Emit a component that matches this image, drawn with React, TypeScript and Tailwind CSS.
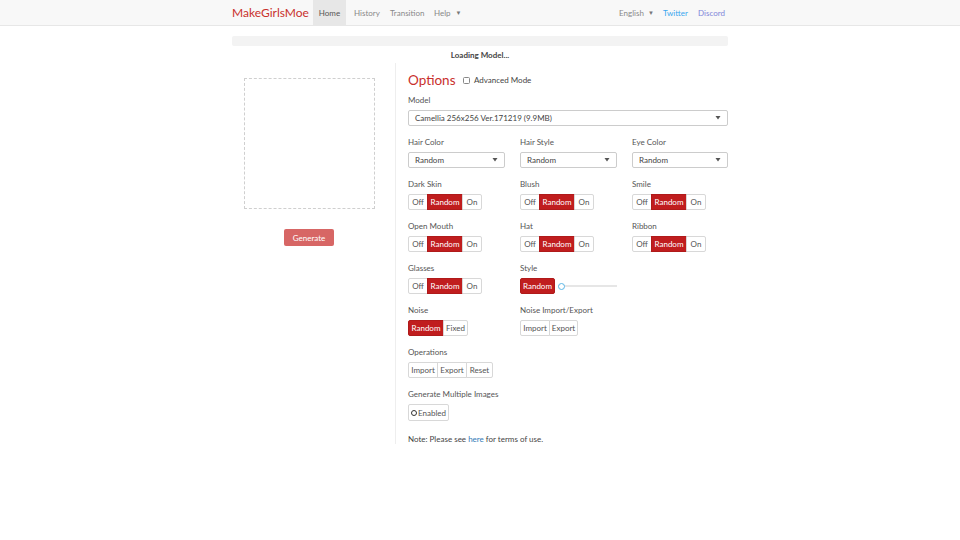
import * as React from "react";

const font = { fontFamily: "Lato, 'Noto Sans', sans-serif" };

function Caret() {
  return (
    <svg width="6" height="4" viewBox="0 0 6 4" className="shrink-0">
      <path d="M0.5 0 L5.5 0 L3 3.5 Z" fill="#555" />
    </svg>
  );
}

function Select({ value, width }: { value: string; width: string }) {
  return (
    <div
      className={`${width} h-[16px] border border-[#cccccc] rounded-[2px] bg-white flex items-center justify-between pl-[6px] pr-[6px] text-[8px] text-[#444]`}
    >
      <span>{value}</span>
      <Caret />
    </div>
  );
}

type Btn = { label: string; w: string; active?: boolean };

function Group({ items }: { items: Btn[] }) {
  return (
    <div className="flex h-[16px]">
      {items.map((b, i) => (
        <div
          key={i}
          className={`${b.w} flex items-center justify-center text-[8px] border ${
            b.active
              ? "bg-[#c01d1e] border-[#b01a1a] text-white"
              : "bg-white border-[#d8d8d8] text-[#555]"
          } ${i > 0 ? "-ml-px" : ""} ${i === 0 ? "rounded-l-[2px]" : ""} ${
            i === items.length - 1 ? "rounded-r-[2px]" : ""
          }`}
        >
          {b.label}
        </div>
      ))}
    </div>
  );
}

const tri: Btn[] = [
  { label: "Off", w: "w-[20px]" },
  { label: "Random", w: "w-[36px]", active: true },
  { label: "On", w: "w-[20px]" },
];

function Field({ label, children }: { label: string; children: React.ReactNode }) {
  return (
    <div className="flex flex-col h-[42px]">
      <div className="h-[10px] leading-[10px] text-[8px] text-[#555] mb-[5px] whitespace-nowrap">{label}</div>
      {children}
    </div>
  );
}

export default function App() {
  return (
    <div className="w-[960px] h-[540px] bg-white overflow-hidden" style={font}>
      {/* navbar */}
      <nav className="h-[26px] bg-[#f8f8f8] border-b border-[#e7e7e7]">
        <div className="w-[496px] mx-auto flex h-full items-stretch">
          <div className="w-[81px] flex items-center text-[12px] text-[#c9302c] whitespace-nowrap">
            MakeGirlsMoe
          </div>
          <div className="flex text-[8px] text-[#888]">
            <div className="w-[33px] bg-[#e7e7e7] text-[#555] flex items-center justify-center">Home</div>
            <div className="w-[36px] pl-[8px] flex items-center">History</div>
            <div className="w-[44px] pl-[8px] flex items-center">Transition</div>
            <div className="pl-[8px] flex items-center gap-[5px]">
              Help <span className="text-[6px] text-[#777]">▼</span>
            </div>
          </div>
          <div className="ml-auto flex text-[8px] items-center">
            <div className="w-[44px] flex items-center gap-[4px] text-[#888]">
              English <span className="text-[6px] text-[#777]">▼</span>
            </div>
            <div className="w-[35px] text-[#3ba7ef]">Twitter</div>
            <div className="w-[30px] text-[#7f86d8]">Discord</div>
          </div>
        </div>
      </nav>

      <main className="w-[496px] mx-auto">
        <div className="mt-[10px] h-[10px] bg-[#f3f3f3] rounded-[2px]" />
        <div className="h-[17px] flex items-center justify-center text-[8px] font-bold text-[#444]">
          Loading Model...
        </div>

        <div className="flex">
          {/* left column */}
          <div className="w-[164px] border-r border-[#eeeeee] h-[381px] flex flex-col">
            <div className="ml-[12px] mt-[15px] w-[131px] h-[131px] border border-dashed border-[#cfcfcf]" />
            <div className="ml-[52px] mt-[20px] w-[50px] h-[17px] rounded-[2px] bg-[#d76665] text-white text-[8px] flex items-center justify-center">
              Generate
            </div>
          </div>

          {/* right column */}
          <div className="pl-[12px] flex-1">
            <div className="h-[32px] flex items-center pt-[2px]">
              <span className="w-[55px] text-[13.5px] text-[#c9302c]">Options</span>
              <span className="flex items-center gap-[4px] text-[8px] text-[#444]">
                <span className="w-[7px] h-[7px] border border-[#888] rounded-[1.5px] bg-white" />
                Advanced Mode
              </span>
            </div>

            <Field label="Model">
              <Select value="Camellia 256x256 Ver.171219 (9.9MB)" width="w-[320px]" />
            </Field>

            <div className="grid grid-cols-[112px_112px_96px]">
              <Field label="Hair Color">
                <Select value="Random" width="w-[97px]" />
              </Field>
              <Field label="Hair Style">
                <Select value="Random" width="w-[97px]" />
              </Field>
              <Field label="Eye Color">
                <Select value="Random" width="w-[96px]" />
              </Field>

              <Field label="Dark Skin">
                <Group items={tri} />
              </Field>
              <Field label="Blush">
                <Group items={tri} />
              </Field>
              <Field label="Smile">
                <Group items={tri} />
              </Field>

              <Field label="Open Mouth">
                <Group items={tri} />
              </Field>
              <Field label="Hat">
                <Group items={tri} />
              </Field>
              <Field label="Ribbon">
                <Group items={tri} />
              </Field>

              <Field label="Glasses">
                <Group items={tri} />
              </Field>
              <Field label="Style">
                <div className="flex items-center h-[16px]">
                  <Group items={[{ label: "Random", w: "w-[35px]", active: true }]} />
                  <div className="relative ml-[3px] w-[59px] h-[2px] bg-[#e6e6e6]">
                    <div className="absolute -top-[2.5px] left-0 w-[7px] h-[7px] rounded-full border border-[#5bb6e6] bg-white" />
                  </div>
                </div>
              </Field>
              <div />

              <Field label="Noise">
                <Group
                  items={[
                    { label: "Random", w: "w-[36px]", active: true },
                    { label: "Fixed", w: "w-[25px]" },
                  ]}
                />
              </Field>
              <Field label="Noise Import/Export">
                <Group
                  items={[
                    { label: "Import", w: "w-[30px]" },
                    { label: "Export", w: "w-[29px]" },
                  ]}
                />
              </Field>
              <div />
            </div>

            <Field label="Operations">
              <Group
                items={[
                  { label: "Import", w: "w-[30px]" },
                  { label: "Export", w: "w-[30px]" },
                  { label: "Reset", w: "w-[27px]" },
                ]}
              />
            </Field>

            <div className="flex flex-col">
              <div className="h-[10px] leading-[10px] text-[8px] text-[#555] mb-[5px]">Generate Multiple Images</div>
              <div className="w-[41px] h-[17px] border border-[#d8d8d8] rounded-[2px] flex items-center justify-center gap-[1px] text-[8px] text-[#555]">
                <span className="w-[6px] h-[6px] rounded-full border-[1.5px] border-[#333]" />
                Enabled
              </div>
            </div>

            <div className="mt-[13px] text-[8px] text-[#444] h-[10px] leading-[10px]">
              Note: Please see <span className="text-[#337ab7]">here</span> for terms of use.
            </div>
          </div>
        </div>
      </main>
    </div>
  );
}
